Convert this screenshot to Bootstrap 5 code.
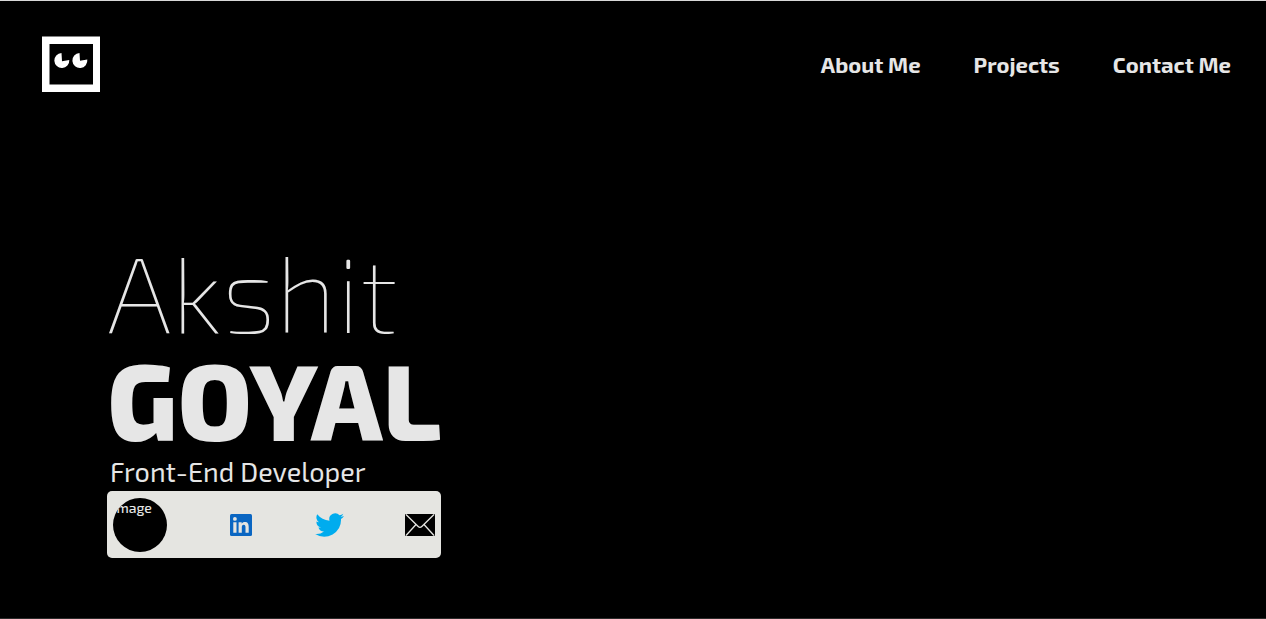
<!DOCTYPE html>
<html lang="en">
<head>
<meta charset="utf-8">
<meta name="viewport" content="width=device-width, initial-scale=1">
<title>Akshit Goyal</title>
<link rel="stylesheet" href="https://cdn.jsdelivr.net/npm/bootstrap@5.3.0/dist/css/bootstrap.min.css">
<style>
body { background: #000; color: #e6e6e6; font-family: "Exo 2", Roboto, "Liberation Sans", sans-serif; border-top: 1px solid #d8d8d8; border-bottom: 1px solid #2b2b2b; }
.site-nav { padding: 35px 35px 0 42px; }
.site-links { gap: 53px; }
.site-links .nav-link { color: #e6e6e6; font-size: 22px; font-weight: 700; line-height: 32px; padding: 0; }
.hero { padding: 145px 0 0 107px; }
.hero-name { font-size: 107px; line-height: 108px; margin: 0; }
.name-first { font-weight: 100; }
.name-last { font-weight: 800; }
.hero-role { font-size: 27px; line-height: 36px; margin: 0 0 2px; padding-left: 3px; }
.social-bar { width: 334px; height: 67px; padding: 6px; background: #e5e5e1; border-radius: 5px; }
.avatar { width: 54px; height: 54px; background: #000; color: #e6e6e6; font-size: 14px; font-weight: 500; line-height: 20px; }
</style>
</head>
<body class="min-vh-100">
<nav class="site-nav d-flex justify-content-between align-items-center">
  <a href="#" aria-label="Home" class="d-flex">
    <svg width="58" height="56" viewBox="0 0 58 56"><path fill="#fff" fill-rule="evenodd" d="M0 .5H58V56H0ZM7.500 8V48.500H51V8Z"/><path fill="#fff" d="M19.500 17A7.500 7.500 0 1 0 27.300 24L20 25.200ZM37.500 17A7.500 7.500 0 1 0 45.300 23.500L38 24.800Z"/></svg>
  </a>
  <ul class="site-links nav">
    <li><a class="nav-link" href="#about">About Me</a></li>
    <li><a class="nav-link" href="#projects">Projects</a></li>
    <li><a class="nav-link" href="#contact">Contact Me</a></li>
  </ul>
</nav>
<main class="hero">
  <h1 class="hero-name"><span class="name-first d-block">Akshit</span><span class="name-last d-block">GOYAL</span></h1>
  <p class="hero-role">Front-End Developer</p>
  <div class="social-bar d-flex justify-content-between align-items-center">
    <div class="avatar rounded-circle overflow-hidden">image</div>
    <a href="#linkedin" aria-label="LinkedIn" class="d-flex"><svg width="24" height="22" viewBox="-2 0 24 22"><rect width="22" height="22" rx="1.500" fill="#0a66c2"/><path fill="#e5e5e1" d="M3.300 8.300H6.500V18.700H3.300ZM8.600 8.300H11.700V9.700C12.300 8.700 13.400 8 14.800 8C18 8 18.700 10.100 18.700 13V18.700H15.500V13.600C15.500 12.100 15.400 10.700 13.700 10.700S11.800 12.200 11.800 13.600V18.700H8.600Z"/><circle cx="4.900" cy="4.900" r="1.900" fill="#e5e5e1"/></svg></a>
    <a href="#twitter" aria-label="Twitter" class="d-flex"><svg width="30" height="26" viewBox="-1 -.5 25 21"><path fill="#00acee" d="M24 2.600a10 10 0 0 1-2.800.8 4.900 4.900 0 0 0 2.200-2.700 9.900 9.900 0 0 1-3.100 1.200 4.900 4.900 0 0 0-8.400 4.500A14 14 0 0 1 1.700 1.100a4.900 4.900 0 0 0 1.500 6.600 4.900 4.900 0 0 1-2.200-.6v.1a4.900 4.900 0 0 0 3.900 4.800 4.900 4.900 0 0 1-2.200.1 4.900 4.900 0 0 0 4.600 3.400A9.900 9.900 0 0 1 0 17.500 14 14 0 0 0 21.500 5.100 10 10 0 0 0 24 2.600Z"/></svg></a>
    <a href="#email" aria-label="Email" class="d-flex"><svg width="30" height="22" viewBox="0 0 30 22"><rect width="30" height="22" rx="1" fill="#000"/><path fill="none" stroke="#e5e5e1" stroke-width="1.300" d="M1 0.500 13.200 12.500Q15 14.300 16.800 12.500L29 .5M1 21.500 11 10.500M29 21.500 19 10.500"/></svg></a>
  </div>
</main>
<script src="https://cdn.jsdelivr.net/npm/bootstrap@5.3.0/dist/js/bootstrap.bundle.min.js"></script>
</body>
</html>
